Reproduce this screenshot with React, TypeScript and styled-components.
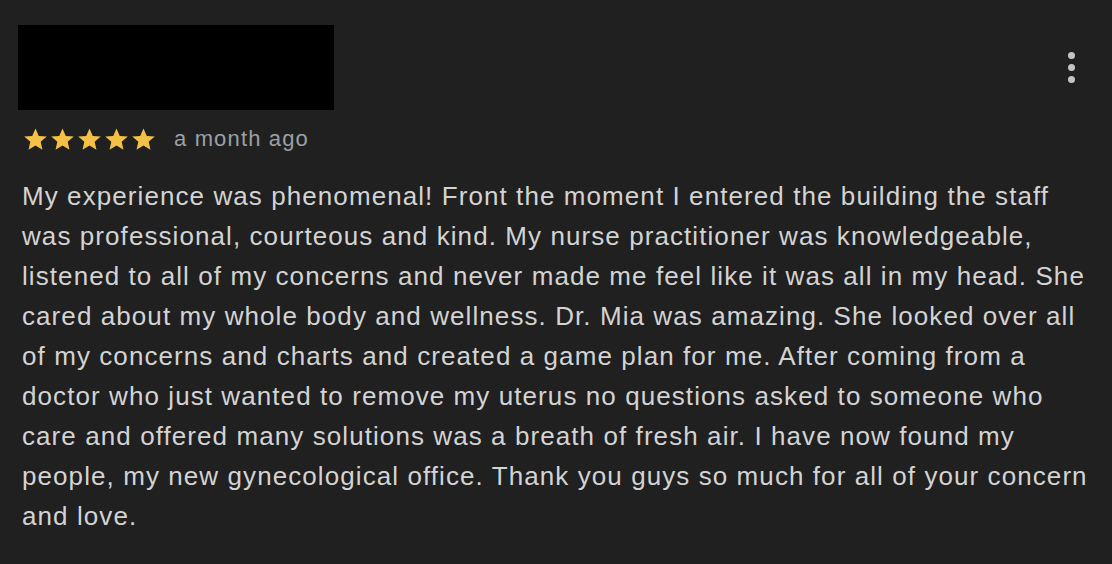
import React from 'react';
import styled, { createGlobalStyle } from 'styled-components';

const FONT = '"Liberation Sans", Arial, Helvetica, sans-serif';

const GlobalStyle = createGlobalStyle`
  html, body {
    margin: 0;
    padding: 0;
    background: #202020;
  }
`;

const Card = styled.div`
  width: 1112px;
  height: 564px;
  box-sizing: border-box;
  padding: 25px 0 0 22px;
  background: #202020;
  font-family: ${FONT};
  position: relative;
  overflow: hidden;
`;

const Header = styled.div`
  display: flex;
  flex-direction: column;
`;

const Redacted = styled.div`
  width: 316px;
  height: 85px;
  background: #000;
  margin-left: -4px;
`;

const MetaRow = styled.div`
  display: flex;
  align-items: center;
  gap: 17px;
  margin-top: 14px;
  height: 30px;
`;

const Stars = styled.div`
  display: flex;
`;

const Ago = styled.span`
  color: #9aa0a6;
  font-size: 22px;
  letter-spacing: 1.15px;
  line-height: 30px;
`;

const Body = styled.p`
  margin: 22px 0 0 0;
  width: 1074px;
  color: #d3d3d3;
  font-size: 26px;
  letter-spacing: 1.08px;
  line-height: 40px;
`;

const MenuButton = styled.button`
  position: absolute;
  top: 52px;
  right: 37px;
  display: flex;
  flex-direction: column;
  gap: 5px;
  padding: 0;
  border: none;
  background: none;
`;

const Dot = styled.span`
  width: 7px;
  height: 7px;
  border-radius: 50%;
  background: #c4c4c4;
`;

const Star: React.FC = () => (
  <svg width="27" height="27" viewBox="0 0 24 24">
    <path
      fill="#f4c146"
      d="M12 2.2l2.9 6.6 7.1.6-5.4 4.7 1.6 7-6.2-3.7-6.2 3.7 1.6-7L2 9.4l7.1-.6z"
    />
  </svg>
);

const REVIEW =
  'My experience was phenomenal! Front the moment I entered the building the staff was professional, courteous and kind. My nurse practitioner was knowledgeable, listened to all of my concerns and never made me feel like it was all in my head. She cared about my whole body and wellness. Dr. Mia was amazing. She looked over all of my concerns and charts and created a game plan for me. After coming from a doctor who just wanted to remove my uterus no questions asked to someone who care and offered many solutions was a breath of fresh air. I have now found my people, my new gynecological office. Thank you guys so much for all of your concern and love.';

export default function App() {
  return (
    <>
      <GlobalStyle />
      <Card>
        <Header>
          <Redacted />
          <MetaRow>
            <Stars>
              {[0, 1, 2, 3, 4].map((i) => (
                <Star key={i} />
              ))}
            </Stars>
            <Ago>a month ago</Ago>
          </MetaRow>
        </Header>
        <Body>{REVIEW}</Body>
        <MenuButton aria-label="More options">
          <Dot />
          <Dot />
          <Dot />
        </MenuButton>
      </Card>
    </>
  );
}
